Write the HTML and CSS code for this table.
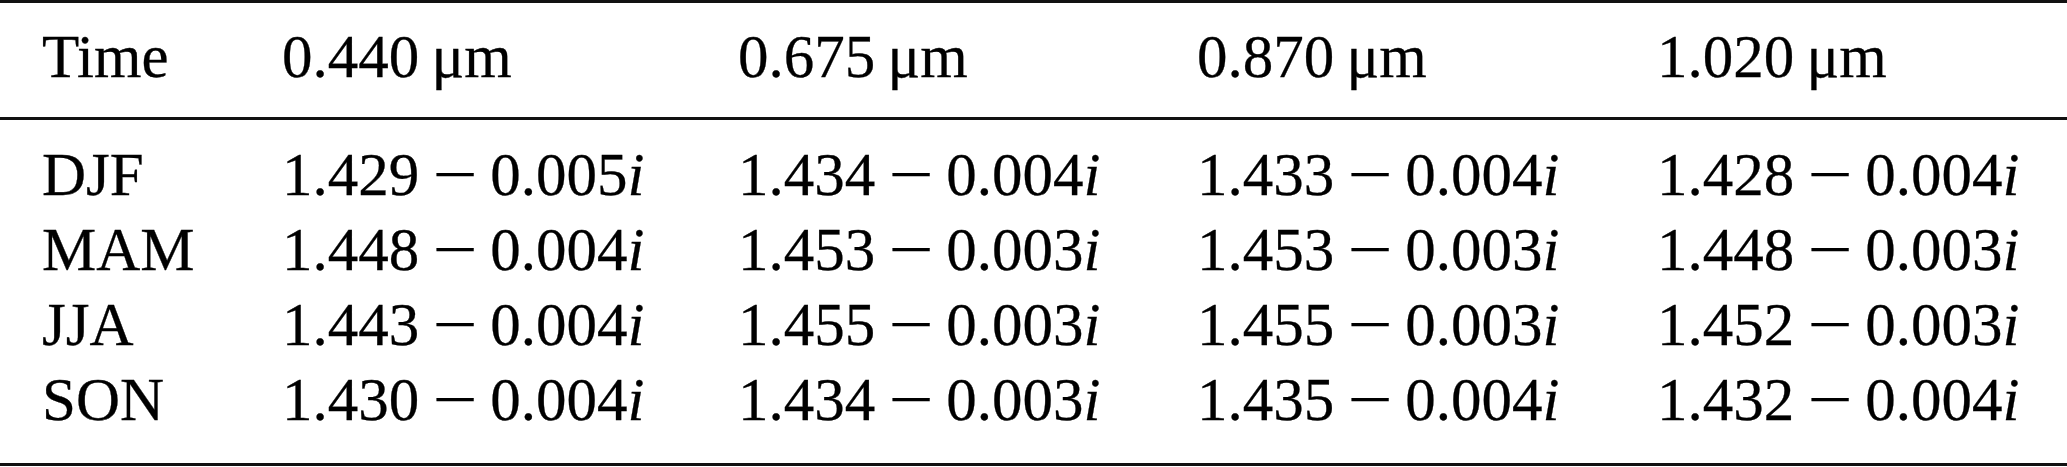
FILE: index.html
```html
<!DOCTYPE html>
<html>

	<head>
		<meta charset="UTF-8">
		<title>Refractive index by season</title>
		<link rel="stylesheet" href="styles.css">
	</head>

	<body>
		<table class="ri">
			<colgroup>
				<col class="c-time">
				<col class="c-a">
				<col class="c-b">
				<col class="c-c">
				<col>
			</colgroup>
			<thead>
				<tr>
					<th>Time</th>
					<th>0.440&thinsp;μm</th>
					<th>0.675&thinsp;μm</th>
					<th>0.870&thinsp;μm</th>
					<th>1.020&thinsp;μm</th>
				</tr>
			</thead>
			<tbody>
				<tr class="first">
					<td>DJF</td>
					<td>1.429 <span class="op">&minus;</span> 0.005<i>i</i></td>
					<td>1.434 <span class="op">&minus;</span> 0.004<i>i</i></td>
					<td>1.433 <span class="op">&minus;</span> 0.004<i>i</i></td>
					<td>1.428 <span class="op">&minus;</span> 0.004<i>i</i></td>
				</tr>
				<tr>
					<td>MAM</td>
					<td>1.448 <span class="op">&minus;</span> 0.004<i>i</i></td>
					<td>1.453 <span class="op">&minus;</span> 0.003<i>i</i></td>
					<td>1.453 <span class="op">&minus;</span> 0.003<i>i</i></td>
					<td>1.448 <span class="op">&minus;</span> 0.003<i>i</i></td>
				</tr>
				<tr>
					<td>JJA</td>
					<td>1.443 <span class="op">&minus;</span> 0.004<i>i</i></td>
					<td>1.455 <span class="op">&minus;</span> 0.003<i>i</i></td>
					<td>1.455 <span class="op">&minus;</span> 0.003<i>i</i></td>
					<td>1.452 <span class="op">&minus;</span> 0.003<i>i</i></td>
				</tr>
				<tr class="last">
					<td>SON</td>
					<td>1.430 <span class="op">&minus;</span> 0.004<i>i</i></td>
					<td>1.434 <span class="op">&minus;</span> 0.003<i>i</i></td>
					<td>1.435 <span class="op">&minus;</span> 0.004<i>i</i></td>
					<td>1.432 <span class="op">&minus;</span> 0.004<i>i</i></td>
				</tr>
			</tbody>
		</table>
	</body>

</html>
```

FILE: styles.css
```css
* {
	margin: 0px;
	padding: 0px;
}

body {
	background: #fff;
	color: #000;
	font-family: "Liberation Serif", "Times New Roman", serif;
}

.ri {
	width: 100%;
	table-layout: fixed;
	border-collapse: separate;
	border-spacing: 0;
	font-size: 61px;
	line-height: 75px;
	-webkit-text-stroke: 0.3px #000;
}

.c-time {
	width: 282px;
}

.c-a {
	width: 456px;
}

.c-b {
	width: 459px;
}

.c-c {
	width: 460px;
}

.ri th,
.ri td {
	text-align: left;
	font-weight: normal;
	white-space: nowrap;
}

.ri th:first-child,
.ri td:first-child {
	padding-left: 42px;
}

.ri th {
	padding-top: 16px;
	padding-bottom: 23px;
	border-top: 3px solid #111;
	border-bottom: 3px solid #111;
}

.ri tr.first td {
	padding-top: 17px;
}

.ri tr.last td {
	padding-bottom: 26px;
	border-bottom: 3px solid #111;
}

/* math minus is longer than the font's own glyph */
.op {
	display: inline-block;
	margin: 0 3px;
	transform: scaleX(1.3);
}

.ri i {
	font-style: italic;
}
```
